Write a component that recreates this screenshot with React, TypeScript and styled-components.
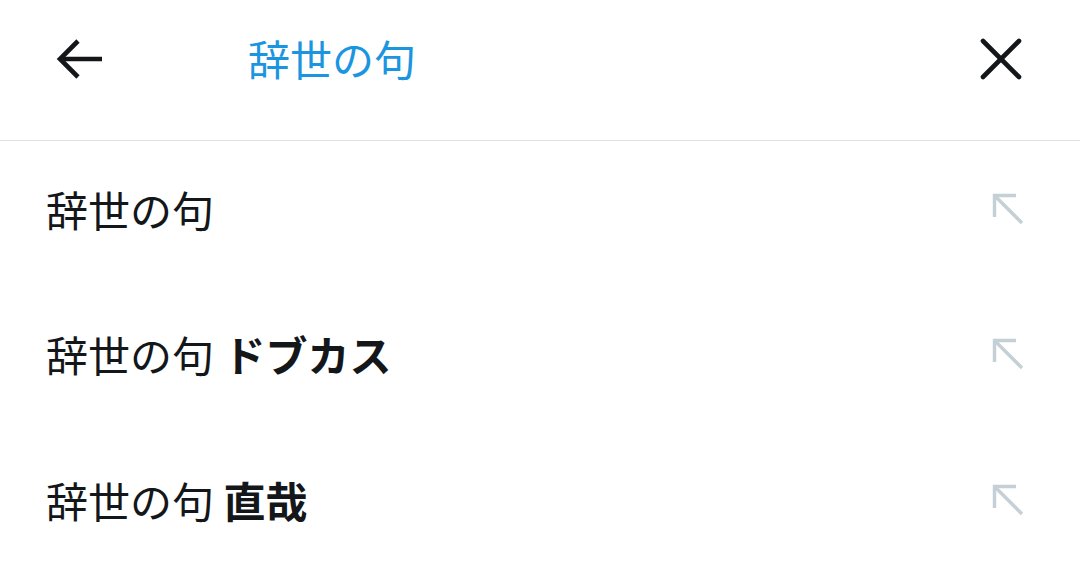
import React from 'react';
import styled, { createGlobalStyle } from 'styled-components';

const GlobalStyle = createGlobalStyle`
  html, body {
    margin: 0;
    padding: 0;
    background: #ffffff;
  }
  body {
    font-family: "Noto Sans CJK JP", "Noto Sans", sans-serif;
    color: #14171a;
  }
`;

const Page = styled.div`
  width: 1080px;
  height: 581px;
  overflow: hidden;
  background: #fff;
`;

const Header = styled.header`
  height: 141px;
  display: flex;
  align-items: center;
  border-bottom: 1px solid #dde1e4;
  padding: 0 56px 23px 54px;
  box-sizing: border-box;
`;

const IconButton = styled.button`
  width: 50px;
  height: 50px;
  border: 0;
  padding: 0;
  background: none;
  display: flex;
  align-items: center;
  justify-content: center;
  color: #14171a;
`;

const Title = styled.h1`
  flex: 1;
  margin: 0 0 0 144px;
  font-size: 42px;
  font-weight: 400;
  line-height: 1;
  color: #1b95e0;
  padding-bottom: 2px;
`;

const List = styled.ul`
  list-style: none;
  margin: 0;
  padding: 0;
`;

const Row = styled.li`
  height: 145.5px;
  display: flex;
  align-items: center;
  justify-content: space-between;
  padding: 0 54px 10px 46px;
  box-sizing: border-box;
`;

const Query = styled.span`
  font-size: 42px;
  line-height: 1;
  color: #14171a;
  b {
    font-weight: 700;
  }
`;

const Back = () => (
  <svg width="50" height="50" viewBox="0 0 50 50" fill="none" stroke="currentColor" strokeWidth="4.6" strokeLinecap="butt">
    <path d="M48 25H6" />
    <path d="M24 7L6 25L24 43" />
  </svg>
);

const Close = () => (
  <svg width="50" height="50" viewBox="0 0 50 50" fill="none" stroke="currentColor" strokeWidth="4.6" strokeLinecap="round">
    <path d="M9 7L45 43" />
    <path d="M45 7L9 43" />
  </svg>
);

const Fill = () => (
  <svg width="36" height="36" viewBox="0 0 36 36" fill="none" stroke="#c4d0d6" strokeWidth="3.4" strokeLinecap="butt">
    <path d="M26 4.5H4.5V26" />
    <path d="M4.5 4.5L32 32" />
  </svg>
);

const rows: { base: string; extra?: string }[] = [
  { base: '辞世の句' },
  { base: '辞世の句', extra: 'ドブカス' },
  { base: '辞世の句', extra: '直哉' },
];

export default function App() {
  return (
    <Page>
      <GlobalStyle />
      <Header>
        <IconButton aria-label="戻る"><Back /></IconButton>
        <Title>辞世の句</Title>
        <IconButton aria-label="閉じる"><Close /></IconButton>
      </Header>
      <List>
        {rows.map((r, i) => (
          <Row key={i}>
            <Query>
              {r.base}
              {r.extra && <> <b>{r.extra}</b></>}
            </Query>
            <Fill />
          </Row>
        ))}
      </List>
    </Page>
  );
}
